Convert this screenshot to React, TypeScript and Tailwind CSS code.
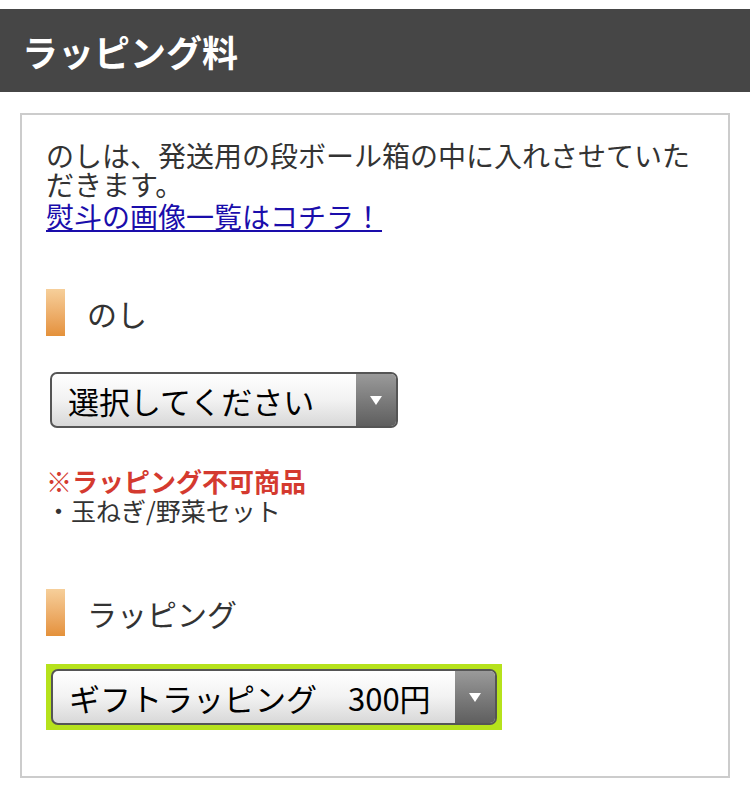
const jp = "font-['Hiragino_Sans','Noto_Sans_CJK_JP',sans-serif]";

function SectionTitle({ label }: { label: string }) {
  return (
    <div className="flex items-center gap-[22px]">
      <span className="block h-[47px] w-[19px] bg-gradient-to-b from-[#f6cf9a] to-[#e4913a]" />
      <span className="text-[30px] leading-none text-[#333]">{label}</span>
    </div>
  );
}

function FakeSelect({ text, width }: { text: string; width: string }) {
  return (
    <div
      className={`flex h-[56px] ${width} items-stretch overflow-hidden rounded-[7px] border-2 border-[#555] bg-gradient-to-b from-white via-[#f2f2f2] to-[#d8d8d8]`}
    >
      <span className="flex flex-1 items-center whitespace-pre pl-[16px] text-[31px] leading-none text-black">
        {text}
      </span>
      <span className="flex w-[40px] items-center justify-center bg-gradient-to-b from-[#9a9a9a] to-[#5f5f5f]">
        <svg width="14" height="11" viewBox="0 0 14 11">
          <path d="M1 1h12L7 10z" fill="#fff" />
        </svg>
      </span>
    </div>
  );
}

export default function App() {
  return (
    <div className={`min-h-[790px] w-[750px] bg-white pt-[9px] ${jp}`}>
      {/* header */}
      <div className="flex h-[83px] items-center bg-[#464646] pl-[22px]">
        <h1 className="text-[36px] font-bold text-white">ラッピング料</h1>
      </div>

      <div className="mx-[20px] mt-[21px] h-[665px] border-2 border-[#cccccc] px-[24px] pt-[26px]">
        <p className="text-[28px] leading-[29px] text-[#333]">
          のしは、発送用の段ボール箱の中に入れさせていただきます。
        </p>
        <a href="#" className="mt-[2px] block text-[28px] leading-[31px] text-[#1a0dab] underline">
          熨斗の画像一覧はコチラ！
        </a>

        <div className="mt-[57px]">
          <SectionTitle label="のし" />
        </div>
        <div className="ml-[4px] mt-[36px]">
          <FakeSelect text="選択してください" width="w-[348px]" />
        </div>

        <p className="mt-[38px] text-[26px] font-bold leading-[30px] text-[#d43a2f]">※ラッピング不可商品</p>
        <p className="text-[25px] leading-[28px] text-[#333]">・玉ねぎ/野菜セット</p>

        <div className="mt-[65px]">
          <SectionTitle label="ラッピング" />
        </div>
        <div className="mt-[28px] inline-block bg-[#b6e21c] p-[5px]">
          <FakeSelect text="ギフトラッピング　300円" width="w-[446px]" />
        </div>
      </div>
    </div>
  );
}
